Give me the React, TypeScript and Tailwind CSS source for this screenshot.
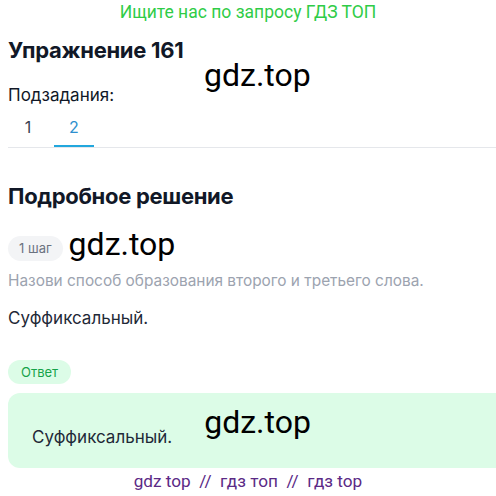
export default function App() {
  return (
    <div className="w-[496px] h-[496px] overflow-hidden bg-white font-['Inter',sans-serif] text-[#111827]">
      {/* search hint banner */}
      <p className="h-[24px] pt-[1px] text-center font-['Roboto',sans-serif] text-[17.5px] leading-[22px] text-[#2fcc47]">
        Ищите нас по запросу ГДЗ ТОП
      </p>

      <div className="pl-2">
        <div className="relative">
          <h1 className="mt-[12px] text-[22px] font-bold leading-[28px] tracking-[-0.3px]">Упражнение 161</h1>
          <span className="absolute left-[196px] top-[19px] font-['Roboto',sans-serif] text-[32px] leading-[40px] text-black">gdz.top</span>
        </div>

        <p className="mt-[19px] text-[17px] leading-[24px]">Подзадания:</p>

        {/* subtask tabs */}
        <div className="flex border-b border-[#e5e7eb]">
          <button className="w-[40px] pb-[8px] pt-[8px] text-[16px] leading-[24px] text-[#374151]">1</button>
          <button className="ml-[6px] w-[40px] border-b-2 border-[#22a7dd] pb-[6px] pt-[8px] text-[16px] leading-[24px] text-[#2d8fce]">2</button>
        </div>

        <h2 className="mt-[34px] text-[22px] font-bold leading-[28px] tracking-[-0.3px]">Подробное решение</h2>

        <div className="mt-[24px] flex h-[28px] items-center gap-[6px]">
          <span className="rounded-full bg-[#f3f4f6] px-[11px] py-[4px] text-[13px] leading-[17px] text-[#6b7280]">1 шаг</span>
          <span className="-mt-[8px] font-['Roboto',sans-serif] text-[32px] leading-[36px] text-black">gdz.top</span>
        </div>

        <p className="mt-[8px] text-[15.4px] leading-[22px] text-[#9ca3af]">Назови способ образования второго и третьего слова.</p>

        <p className="mt-[14px] text-[17px] leading-[24px] text-[#1f2937]">Суффиксальный.</p>

        <span className="mt-[30px] block w-fit rounded-full bg-[#dcfce7] px-[13px] py-[3px] text-[13px] leading-[18px] text-[#16a34a]">Ответ</span>

        <div className="mt-[9px] flex h-[75px] items-center gap-[32px] rounded-l-[12px] bg-[#dcfce7] pl-[24px]">
          <span className="mt-[13px] text-[17px] leading-[24px] text-[#1f2937]">Суффиксальный.</span>
          <span className="-mt-[17px] font-['Roboto',sans-serif] text-[32px] leading-[36px] text-black">gdz.top</span>
        </div>
      </div>

      <p className="mt-[2px] text-center font-['Roboto',sans-serif] text-[17.2px] leading-[22px] text-[#5b2a86]">
        gdz top&nbsp; //&nbsp; гдз топ&nbsp; //&nbsp; гдз top
      </p>
    </div>
  );
}
